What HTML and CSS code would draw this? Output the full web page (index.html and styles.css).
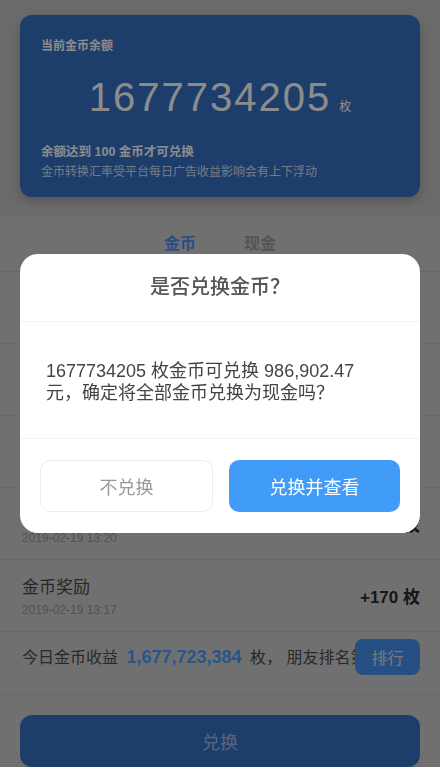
FILE: index.html
```html
<!DOCTYPE html>
<html lang="zh-CN">
<head>
  <meta charset="UTF-8" />
  <meta name="viewport" content="width=device-width, initial-scale=1.0" />
  <title>金币兑换</title>
  <link rel="stylesheet" href="styles.css">
</head>
<body>
  <div class="page">
    <div class="balance-card">
      <div class="balance-label">当前金币余额</div>
      <div class="balance-amount">
        <span class="balance-num">1677734205</span>
        <span class="balance-unit">枚</span>
      </div>
      <div class="balance-tip">余额达到 100 金币才可兑换</div>
      <div class="balance-note">金币转换汇率受平台每日广告收益影响会有上下浮动</div>
    </div>

    <div class="records">
      <div class="tabs">
        <div class="tab active">金币</div>
        <div class="tab">现金</div>
      </div>

      <div class="record">
        <div class="record-info">
          <div class="record-title">金币奖励</div>
          <div class="record-date">2019-02-19 13:32</div>
        </div>
        <div class="record-amount">+120 枚</div>
      </div>
      <div class="record">
        <div class="record-info">
          <div class="record-title">金币奖励</div>
          <div class="record-date">2019-02-19 13:28</div>
        </div>
        <div class="record-amount">+150 枚</div>
      </div>
      <div class="record">
        <div class="record-info">
          <div class="record-title">金币奖励</div>
          <div class="record-date">2019-02-19 13:24</div>
        </div>
        <div class="record-amount">+160 枚</div>
      </div>
      <div class="record">
        <div class="record-info">
          <div class="record-title">金币奖励</div>
          <div class="record-date">2019-02-19 13:20</div>
        </div>
        <div class="record-amount">+180 枚</div>
      </div>
      <div class="record">
        <div class="record-info">
          <div class="record-title">金币奖励</div>
          <div class="record-date">2019-02-19 13:17</div>
        </div>
        <div class="record-amount">+170 枚</div>
      </div>

      <div class="summary">
        <div class="summary-text">今日金币收益 <span class="summary-num">1,677,723,384</span> 枚， 朋友排名第</div>
        <button class="rank-btn">排行</button>
      </div>

      <button class="exchange-btn">兑换</button>
    </div>
  </div>

  <!-- confirm dialog -->
  <div class="mask">
    <div class="dialog">
      <div class="dialog-title">是否兑换金币？</div>
      <div class="dialog-body">
        <p>1677734205 枚金币可兑换 986,902.47 元，确定将全部金币兑换为现金吗？</p>
      </div>
      <div class="dialog-actions">
        <button class="btn-cancel">不兑换</button>
        <button class="btn-confirm">兑换并查看</button>
      </div>
    </div>
  </div>
</body>
</html>
```

FILE: styles.css
```css
body {
  margin: 0;
  background: #c2c2c2;
  color: #333;
  font-family: "Liberation Sans", "Noto Sans CJK SC", sans-serif;
}

button {
  font-family: inherit;
  border: none;
  cursor: pointer;
}

.page {
  padding-top: 15px;
  height: 752px;
  overflow: hidden;
}

/* Balance card */
.balance-card {
  margin: 0 20px;
  height: 182px;
  box-sizing: border-box;
  padding: 23px 21px 0;
  background: #3670c4;
  border-radius: 12px;
  box-shadow: 0 4px 10px rgba(0, 0, 0, 0.2);
  color: #fff;
}

.balance-label {
  font-size: 12px;
  line-height: 17px;
  font-weight: 600;
}

.balance-amount {
  margin-top: 18px;
  display: flex;
  justify-content: center;
  align-items: baseline;
  gap: 8px;
}

.balance-num {
  font-size: 40px;
  line-height: 48px;
  letter-spacing: 2px;
}

.balance-unit {
  font-size: 12px;
}

.balance-tip {
  margin-top: 22px;
  font-size: 12.5px;
  line-height: 18px;
  font-weight: 700;
}

.balance-note {
  margin-top: 2px;
  font-size: 12px;
  line-height: 18px;
  color: rgba(255, 255, 255, 0.8);
}

/* Records list */
.records {
  margin-top: 19px;
  background: #cdcdcd;
  height: 600px;
}

.tabs {
  height: 56px;
  display: flex;
  justify-content: center;
  align-items: center;
  border-bottom: 1px solid #c0c0c0;
  box-sizing: border-box;
}

.tab {
  width: 80px;
  text-align: center;
  font-size: 16px;
  font-weight: 700;
  color: #9a9a9a;
  padding-bottom: 4px;
}

.tab.active {
  color: #4a8fef;
}

.record {
  height: 72px;
  box-sizing: border-box;
  padding: 0 20px 0 22px;
  display: flex;
  justify-content: space-between;
  align-items: center;
  border-bottom: 1px solid #c0c0c0;
}

.record-info {
  margin-top: 5px;
}

.record-title {
  font-size: 17px;
  line-height: 22px;
  color: #4a4a4a;
}

.record-date {
  margin-top: 2px;
  font-size: 12px;
  line-height: 18px;
  color: #959595;
}

.record-amount {
  font-size: 17px;
  font-weight: 700;
  color: #2a2a2a;
}

.summary {
  height: 63px;
  box-sizing: border-box;
  padding: 7px 20px 0 22px;
  display: flex;
  align-items: flex-start;
  border-bottom: 1px solid #c0c0c0;
}

.summary-text {
  flex: 1;
  min-width: 0;
  overflow: hidden;
  white-space: nowrap;
  font-size: 16px;
  line-height: 36px;
  color: #4a4a4a;
}

.summary-num {
  margin: 0 4px;
  font-size: 18px;
  font-weight: 700;
  color: #4a9cff;
}

.rank-btn {
  flex: none;
  width: 65px;
  height: 36px;
  border-radius: 8px;
  background: #4592f0;
  color: #ddd;
  font-size: 16px;
}

.exchange-btn {
  display: block;
  margin: 20px 20px 0;
  width: 400px;
  height: 52px;
  border-radius: 12px;
  background: #3670c4;
  color: rgba(255, 255, 255, 0.55);
  font-size: 18px;
}

/* Modal */
.mask {
  position: fixed;
  top: 0; left: 0;
  width: 100%; height: 100%;
  background: rgba(0, 0, 0, 0.45);
  display: flex;
  justify-content: center;
  align-items: center;
}

.dialog {
  width: 400px;
  margin-top: 20px;
  background: #fff;
  border-radius: 18px;
  overflow: hidden;
}

.dialog-title {
  height: 68px;
  line-height: 66px;
  text-align: center;
  font-size: 20px;
  font-weight: 500;
  color: #555;
  border-bottom: 1px solid #f2f2f2;
  box-sizing: border-box;
}

.dialog-body {
  height: 117px;
  box-sizing: border-box;
  padding: 38px 26px 0;
  border-bottom: 1px solid #f2f2f2;
}

.dialog-body p {
  margin: 0;
  max-width: 320px;
  font-size: 18px;
  line-height: 22px;
  color: #444;
}

.dialog-actions {
  display: flex;
  gap: 16px;
  padding: 21px 20px;
}

.dialog-actions button {
  flex: 1;
  height: 52px;
  border-radius: 10px;
  font-size: 18px;
}

.btn-cancel {
  background: #fff;
  border: 1px solid #ececec;
  color: #999;
}

.btn-confirm {
  background: #409cf6;
  color: #fff;
}
```
